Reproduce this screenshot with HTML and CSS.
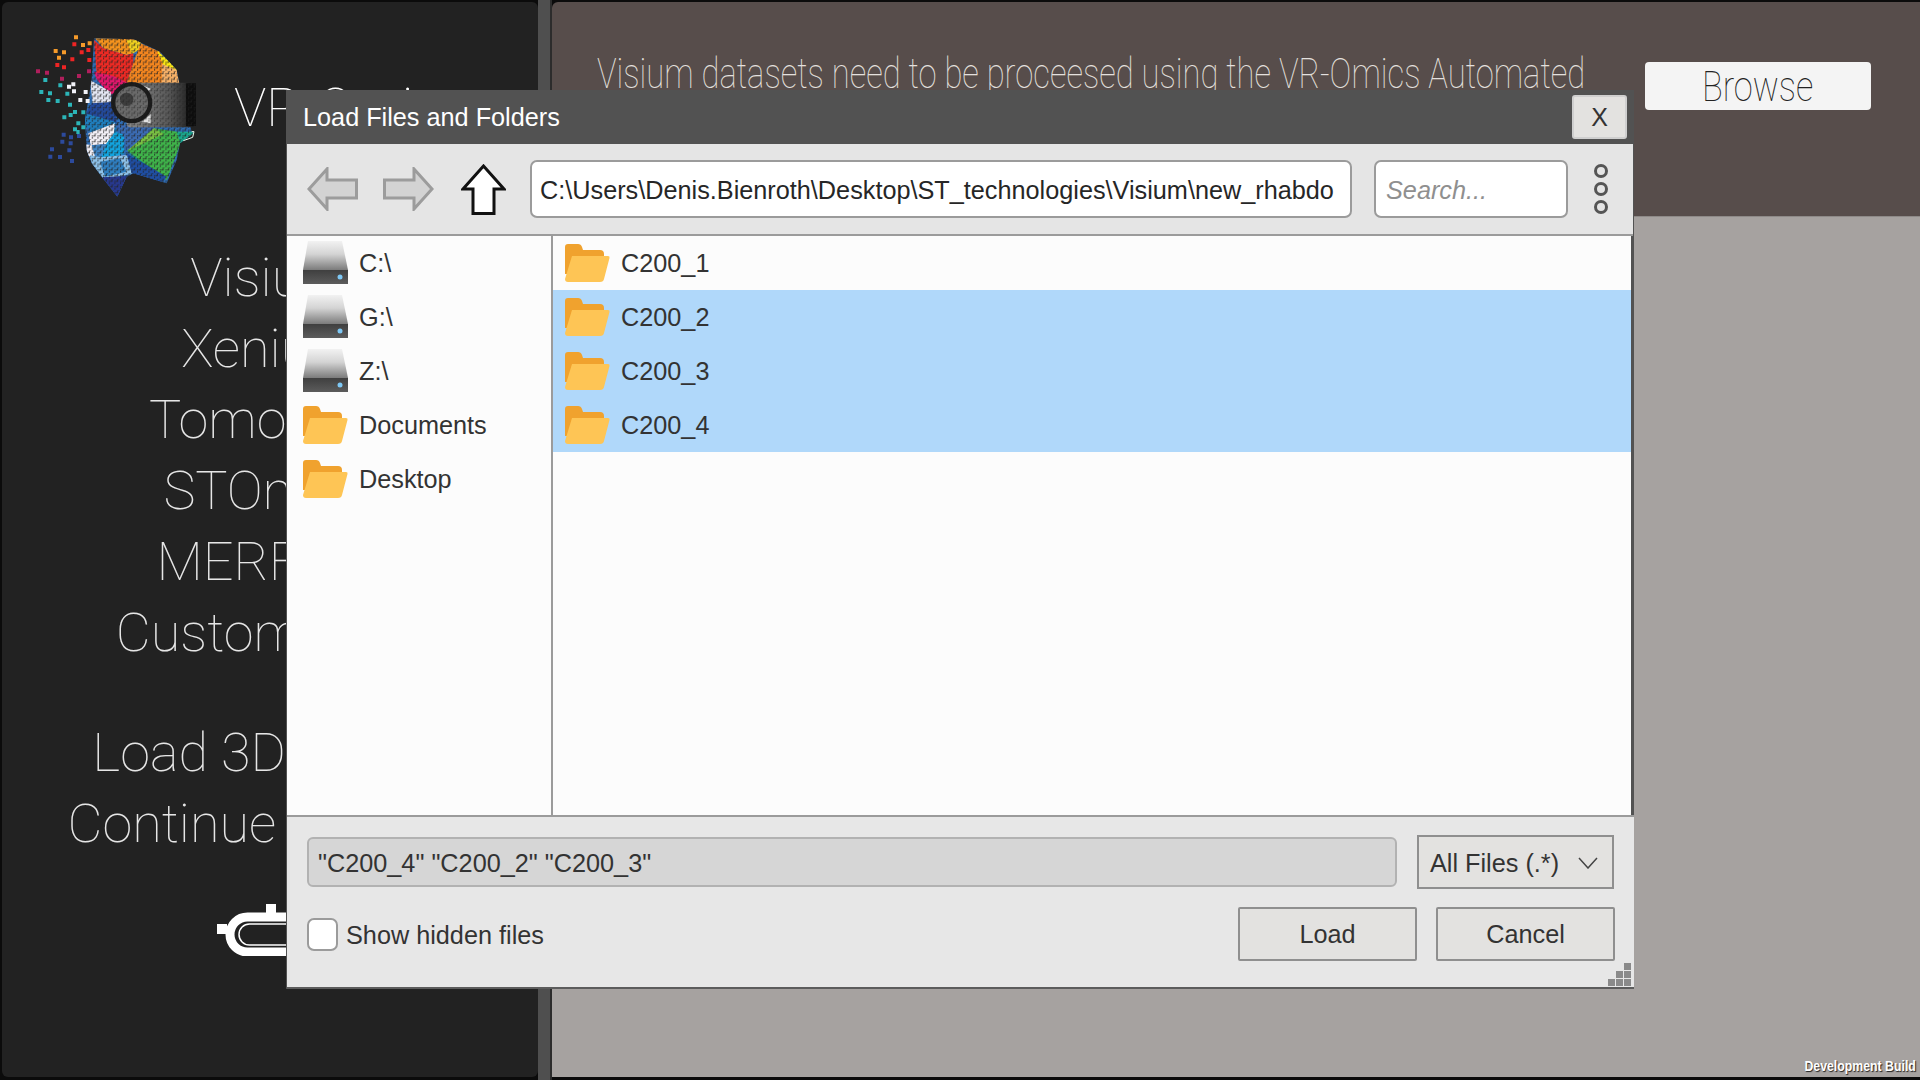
FILE: index.html
```html
<!DOCTYPE html>
<html lang="en">
<head>
    <meta charset="UTF-8">
    <meta name="viewport" content="width=device-width, initial-scale=1.0">
    <title>VR-Omics</title>
    <link rel="stylesheet" href="styles.css">
</head>
<body>

    <!-- shared icons -->
    <svg class="icon-defs" width="0" height="0">
        <defs>
            <linearGradient id="drive-top" x1="0" y1="0" x2="0" y2="1">
                <stop offset="0" stop-color="#f2f2f2"></stop>
                <stop offset="0.45" stop-color="#d4d4d4"></stop>
                <stop offset="1" stop-color="#7b7b7b"></stop>
            </linearGradient>
            <linearGradient id="drive-base" x1="0" y1="0" x2="0" y2="1">
                <stop offset="0" stop-color="#3f3f3f"></stop>
                <stop offset="1" stop-color="#5c5c5c"></stop>
            </linearGradient>
            <linearGradient id="goggle-body" x1="0" y1="0" x2="1" y2="0">
                <stop offset="0" stop-color="#8a8a8a"></stop>
                <stop offset="0.6" stop-color="#5a5a5a"></stop>
                <stop offset="1" stop-color="#161616"></stop>
            </linearGradient>
            <pattern id="mosaic" width="17" height="17" patternUnits="userSpaceOnUse">
                <path d="M2 0h7M11 8h5M0 8h4M4 3v6M13 11v5" stroke="#222" stroke-width="2.500" fill="none"></path>
            </pattern>
            <symbol id="drive" viewBox="0 0 45 44">
                <path d="M5 0H39L45 29H0Z" fill="url(#drive-top)"></path>
                <path d="M0 29H45V43H0Z" fill="url(#drive-base)"></path>
                <circle cx="37" cy="36" r="2.500" fill="#7ec8f5"></circle>
            </symbol>
            <symbol id="folder" viewBox="0 0 45 38">
                <path d="M0 3Q0 0 3 0H13Q16 0 17 3L18 6H35Q39 6 39 10V30H0Z" fill="#f0a22e"></path>
                <path d="M7 12H43Q45 12 44.500 14L39 35Q38.500 38 35 38H3Q0 38 0 35Z" fill="#fec555"></path>
            </symbol>
        </defs>
    </svg>

    <div class="app">
        <aside class="sidebar">
            <div class="brand">
                <svg class="logo" viewBox="0 0 600 570">
                    <defs>
                        <clipPath id="head-clip">
                            <path d="M222 55L340 58L420 95L470 150L478 190L515 335L520 340L480 370L470 420L440 490L340 460L320 470L292 530L245 470L215 430L200 390L195 300L215 180Z"></path>
                        </clipPath>
                    </defs>
                    <g clip-path="url(#head-clip)">
                        <rect x="190" y="50" width="340" height="490" fill="#2f6db5"></rect>
                        <path d="M222 50L345 50L365 75L340 100L320 105L250 85Z" fill="#f7941d"></path>
                        <path d="M320 60L362 60L366 85L335 102Z" fill="#f2d41f"></path>
                        <path d="M222 60L250 85L320 105L340 100L340 130L320 190L230 165Z" fill="#ee2a24"></path>
                        <path d="M362 70L420 95L430 130L425 195L320 190L340 130Z" fill="#f5861f"></path>
                        <path d="M410 90L475 150L440 162L428 130Z" fill="#fde910"></path>
                        <path d="M426 132L470 150L480 195L425 195Z" fill="#f9b268"></path>
                        <path d="M222 155L280 168L322 188L345 195L270 225L230 178Z" fill="#e5176d"></path>
                        <path d="M210 180L272 215L275 245L245 262L218 250Z" fill="#e5e8f5"></path>
                        <path d="M215 250L285 245L290 310L195 310L198 280Z" fill="#234a9d"></path>
                        <path d="M195 280L285 305L290 335L210 335L195 312Z" fill="#1f7fbf"></path>
                        <path d="M205 340L285 310L280 350L260 372L212 376Z" fill="#f4f1f8"></path>
                        <path d="M258 372L285 335L312 345L312 402L238 420Z" fill="#12a5e0"></path>
                        <path d="M285 315L410 315L395 345L322 392L310 345Z" fill="#3b6cb5"></path>
                        <path d="M200 378L260 372L240 420L205 420Z" fill="#3f86c8"></path>
                        <path d="M172 370L215 375L225 410L180 415Z" fill="#f4f1f8"></path>
                        <path d="M210 405L240 412L322 405L335 462L250 476L215 430Z" fill="#8fc3ea"></path>
                        <path d="M240 425L300 415L320 455L255 470Z" fill="#2f7fc1"></path>
                        <path d="M245 472L322 468L292 532Z" fill="#27388f"></path>
                        <path d="M322 392L402 325L472 335L482 370L440 480Z" fill="#3fb44a"></path>
                        <path d="M322 392L402 325L432 342Z" fill="#7ac143"></path>
                        <path d="M322 395L440 475L350 420Z" fill="#0e9a7a"></path>
                        <path d="M320 400L440 470L420 490L335 460Z" fill="#1f4ea3"></path>
                        <path d="M470 335L522 335L516 352L482 372Z" fill="#1aa98f"></path>
                        <rect x="190" y="50" width="340" height="490" fill="url(#mosaic)"></rect>
                    </g>
                    <path d="M48 148h12v12h-12zM75 152h12v12h-12zM120 170h12v12h-12zM171 162h12v12h-12zM201 148h12v12h-12z" fill="#b01f5c"></path>
                    <path d="M162 46h12v12h-12zM101 87h12v12h-12zM126 91h12v12h-12zM183 69h12v12h-12zM203 64h12v12h-12zM111 107h12v12h-12z" fill="#f59a2a"></path>
                    <path d="M157 67h12v12h-12zM179 91h12v12h-12zM199 84h12v12h-12zM151 112h12v12h-12zM106 129h12v12h-12zM126 136h12v12h-12zM202 114h12v12h-12z" fill="#ee2424"></path>
                    <path d="M70 174h12v12h-12zM115 190h12v12h-12zM58 210h12v12h-12zM84 214h12v12h-12zM136 215h12v12h-12zM79 234h12v12h-12zM107 237h12v12h-12zM144 248h12v12h-12zM159 270h12v12h-12zM146 279h12v12h-12zM127 286h12v12h-12zM184 271h12v12h-12zM169 304h12v12h-12zM184 316h12v12h-12zM159 322h12v12h-12zM169 330h10v12h-10z" fill="#2cb5b8"></path>
                    <path d="M141 194h12v12h-12zM154 187h12v12h-12zM156 208h12v12h-12zM191 210h12v12h-12zM175 234h12v12h-12zM197 237h12v12h-12z" fill="#f2f2f8"></path>
                    <path d="M125 338h12v12h-12zM147 346h12v12h-12zM171 342h12v12h-12zM121 359h12v12h-12zM146 364h12v12h-12zM90 382h12v12h-12zM142 385h12v12h-12zM85 404h12v12h-12zM114 405h12v12h-12zM150 417h12v12h-12z" fill="#2c4a9c"></path>
                    <rect x="320" y="188" width="205" height="134" rx="12" fill="url(#goggle-body)"></rect>
                    <rect x="498" y="190" width="30" height="128" fill="#0d0d0d"></rect>
                    <path d="M366 196L392 206L372 232ZM366 305L392 282L392 310Z" fill="#e2e2e2"></path>
                    <circle cx="335" cy="248" r="62" fill="#1a1a1a"></circle>
                    <circle cx="335" cy="248" r="49" fill="#6a6a6a"></circle>
                    <circle cx="320" cy="238" r="20" fill="#3d3d3d"></circle>
                    <rect x="270" y="185" width="260" height="140" fill="url(#mosaic)" opacity="0.7"></rect>
                    <path d="M515 335L522 335L518 352L490 362" fill="none" stroke="#e9fff2" stroke-width="3"></path>
                </svg>
                <div class="brand-name">VR-Omics</div>
            </div>

            <nav class="menu">
                <div class="menu-item">Visium</div>
                <div class="menu-item">Xenium</div>
                <div class="menu-item">Tomo-Seq</div>
                <div class="menu-item">STOmics</div>
                <div class="menu-item">MERFISH</div>
                <div class="menu-item">Custom Data</div>
                <div class="menu-item menu-gap">Load 3D Object</div>
                <div class="menu-item">Continue Session</div>
            </nav>

            <svg class="power-toggle" viewBox="0 0 140 52">
                <path d="M0 25H10M54 0V10" stroke="#fff" stroke-width="10" fill="none"></path>
                <rect x="13" y="13" width="114" height="35" rx="17.500" fill="none" stroke="#fff" stroke-width="9"></rect>
                <rect x="22" y="20" width="96" height="21" rx="10.500" fill="none" stroke="#fff" stroke-width="1.500"></rect>
            </svg>
        </aside>

        <div class="splitter"></div>

        <main class="main">
            <section class="main-top">
                <p class="main-intro">Visium datasets need to be proceesed using the VR-Omics Automated</p>
                <button class="browse-btn"><span>Browse</span></button>
            </section>
            <section class="main-bottom"></section>
        </main>
    </div>

    <div class="dev-build">Development Build</div>

    <!-- file browser, floats over the page -->
    <div class="dialog">
        <header class="dialog-title">
            <span>Load Files and Folders</span>
            <button class="close-btn">X</button>
        </header>

        <div class="toolbar">
            <svg class="nav-arrow" viewBox="0 0 51 44">
                <path d="M2 22L20 2V13H49.500V31H20V42Z"></path>
            </svg>
            <svg class="nav-arrow nav-forward" viewBox="0 0 51 44">
                <path d="M49 22L31 2V13H1.500V31H31V42Z"></path>
            </svg>
            <svg class="nav-up" viewBox="0 0 45 51">
                <path d="M22.500 2L43 25H33V49.500H12V25H2Z"></path>
            </svg>
            <div class="path-box">C:\Users\Denis.Bienroth\Desktop\ST_technologies\Visium\new_rhabdo</div>
            <div class="search-box">Search...</div>
            <div class="more-dots">
                <span></span>
                <span></span>
                <span></span>
            </div>
        </div>

        <div class="browser">
            <div class="quick-list">
                <div class="row"><svg class="row-icon"><use href="#drive"></use></svg><span>C:\</span></div>
                <div class="row"><svg class="row-icon"><use href="#drive"></use></svg><span>G:\</span></div>
                <div class="row"><svg class="row-icon"><use href="#drive"></use></svg><span>Z:\</span></div>
                <div class="row"><svg class="row-icon"><use href="#folder"></use></svg><span>Documents</span></div>
                <div class="row"><svg class="row-icon"><use href="#folder"></use></svg><span>Desktop</span></div>
            </div>
            <div class="file-list">
                <div class="row"><svg class="row-icon"><use href="#folder"></use></svg><span>C200_1</span></div>
                <div class="row selected"><svg class="row-icon"><use href="#folder"></use></svg><span>C200_2</span></div>
                <div class="row selected"><svg class="row-icon"><use href="#folder"></use></svg><span>C200_3</span></div>
                <div class="row selected"><svg class="row-icon"><use href="#folder"></use></svg><span>C200_4</span></div>
            </div>
        </div>

        <div class="dialog-footer">
            <div class="footer-row">
                <div class="name-box">"C200_4" "C200_2" "C200_3"</div>
                <div class="filter-box">
                    <span>All Files (.*)</span>
                    <svg class="chevron" viewBox="0 0 20 12">
                        <path d="M1 1L10 11L19 1"></path>
                    </svg>
                </div>
            </div>
            <div class="footer-row footer-actions">
                <label class="hidden-toggle"><span class="checkbox"></span><span>Show hidden files</span></label>
                <button class="action-btn">Load</button>
                <button class="action-btn">Cancel</button>
            </div>
            <div class="resize-grip">
                <i></i><i></i><i></i><i></i><i></i><i></i>
            </div>
        </div>
    </div>

</body>
</html>
```

FILE: styles.css
```css
html, body {
    margin: 0;
    padding: 0;
    width: 100%;
    height: 100%;
    overflow: hidden;
    background-color: #0b0b0b;
    font-family: "Liberation Sans", Arial, sans-serif;
}

.icon-defs {
    position: absolute;
}

.app {
    display: flex;
    height: 100%;
    box-sizing: border-box;
    padding: 2px 0 3px 2px;
    font-family: Roboto, sans-serif;
    font-weight: 100;
}

/* Left menu */
.sidebar {
    width: 536px;
    flex-shrink: 0;
    background-color: #222;
    border-radius: 6px;
    display: flex;
    flex-direction: column;
    align-items: center;
    color: #e6e6e6;
    overflow: hidden;
}

.brand {
    display: flex;
    align-self: flex-start;
    align-items: center;
    gap: 14px;
    padding: 18px 0 0 18px;
    height: 190px;
    box-sizing: content-box;
}

.logo {
    width: 200px;
    height: 190px;
    flex-shrink: 0;
}

.brand-name {
    font-size: 54px;
    white-space: nowrap;
    margin-top: -16px;
    color: #fff;
}

.menu {
    display: flex;
    flex-direction: column;
    align-items: center;
    margin-top: 32px;
}

.menu-item {
    font-size: 54px;
    line-height: 71px;
    white-space: nowrap;
}

.menu-gap {
    margin-top: 49px;
}

.power-toggle {
    width: 140px;
    height: 52px;
    margin-top: 45px;
    margin-left: 34px;
}

.splitter {
    width: 12px;
    flex-shrink: 0;
    margin-top: -2px;
    margin-bottom: -3px;
    background-color: #4f4f4f;
    border-right: 2px solid #2c2c2c;
}

.main {
    flex: 1;
    display: flex;
    flex-direction: column;
    min-width: 0;
}

.main-top {
    height: 214px;
    background-color: #574d4b;
    border-top-left-radius: 6px;
    display: flex;
    align-items: flex-start;
    box-sizing: border-box;
    padding: 45px 49px 0 45px;
}

.main-intro {
    margin: 0;
    flex: 1;
    min-width: 0;
    font-size: 43px;
    line-height: 52px;
    color: #e4e0de;
    white-space: nowrap;
    /* the original type is a squeezed Roboto */
    transform: scaleX(0.762);
    transform-origin: left center;
}

.browse-btn {
    width: 226px;
    height: 48px;
    flex-shrink: 0;
    margin-top: 15px;
    border: none;
    border-radius: 4px;
    background-color: #f4f4f4;
    font-family: Roboto, sans-serif;
    font-weight: 100;
    font-size: 43px;
    line-height: 48px;
    padding: 0;
    color: #222;
}

.browse-btn span {
    display: inline-block;
    transform: scaleX(0.8);
}

.main-bottom {
    flex: 1;
    background-color: #a6a2a0;
    border-top: 1px solid #8e8a88;
}

.dev-build {
    position: absolute;
    right: 4px;
    bottom: 7px;
    font-size: 15px;
    font-weight: bold;
    line-height: 15px;
    color: #fff;
    text-shadow: 1px 1px 1px #222;
    transform: scaleX(0.82);
    transform-origin: right center;
}

/* File browser dialog */
.dialog {
    position: absolute;
    left: 286px;
    top: 90px;
    width: 1348px;
    height: 899px;
    display: flex;
    flex-direction: column;
    font-size: 25.250px;
    color: #333;
    background-color: #525252;
}

.dialog-title {
    height: 54px;
    flex-shrink: 0;
    display: flex;
    align-items: center;
    justify-content: space-between;
    padding: 0 7px 0 17px;
    color: #fff;
    background-color: #525252;
}

.dialog-title span {
    padding-top: 1px;
}

.close-btn {
    width: 55px;
    height: 44px;
    border: 2px solid #cfcfcf;
    border-radius: 3px;
    background-color: #e3e2e0;
    font-family: "Liberation Sans", Arial, sans-serif;
    font-size: 25px;
    color: #333;
    padding: 0;
}

.toolbar {
    height: 92px;
    flex-shrink: 0;
    box-sizing: border-box;
    margin: 0 1px 0 1px;
    border-bottom: 2px solid #9b9b9b;
    display: flex;
    align-items: center;
    padding: 0 0 0 20px;
    background-color: #e5e5e5;
}

.nav-arrow {
    width: 51px;
    height: 44px;
    margin-right: 24px;
}

.nav-forward {
    margin-left: 1px;
}

.nav-arrow path {
    fill: #d3d3d3;
    stroke: #9c9c9c;
    stroke-width: 3;
}

.nav-up {
    width: 45px;
    height: 51px;
    margin-left: 3px;
}

.nav-up path {
    fill: #fff;
    stroke: #111;
    stroke-width: 3;
}

.path-box,
.search-box {
    height: 58px;
    box-sizing: border-box;
    border: 2px solid #9b9b9b;
    border-radius: 7px;
    background-color: #fff;
    line-height: 56px;
    padding-left: 8px;
    white-space: nowrap;
    overflow: hidden;
}

.path-box {
    width: 822px;
    margin-left: 24px;
    color: #262626;
}

.search-box {
    width: 194px;
    margin-left: 22px;
    padding-left: 10px;
    font-style: italic;
    color: #8f8f8f;
}

.more-dots {
    display: flex;
    flex-direction: column;
    gap: 4px;
    margin-left: 26px;
}

.more-dots span {
    width: 14px;
    height: 14px;
    box-sizing: border-box;
    border: 3px solid #555;
    border-radius: 50%;
}

.browser {
    flex: 1;
    display: flex;
    min-height: 0;
    margin: 0 3px 0 1px;
    background-color: #fcfcfc;
}

.quick-list {
    width: 266px;
    flex-shrink: 0;
    box-sizing: border-box;
    border-right: 2px solid #9b9b9b;
}

.file-list {
    flex: 1;
}

.row {
    height: 54px;
    display: flex;
    align-items: center;
    gap: 11px;
    padding-left: 16px;
    color: #333;
}

.row span {
    padding-top: 1px;
}

.file-list .row {
    padding-left: 12px;
    gap: 11px;
}

.row.selected {
    background-color: #b0d8fa;
}

.row-icon {
    width: 45px;
    height: 44px;
}

.dialog-footer {
    height: 174px;
    flex-shrink: 0;
    position: relative;
    box-sizing: border-box;
    margin: 0 0 0 1px;
    padding: 18px 19px 0 20px;
    border-top: 2px solid #9b9b9b;
    border-bottom: 2px solid #5c5c5c;
    background-color: rgba(235, 235, 235, 0.98);
}

.footer-row {
    display: flex;
    align-items: center;
}

.name-box {
    width: 1090px;
    height: 50px;
    box-sizing: border-box;
    border: 2px solid #b2b2b2;
    border-radius: 6px;
    background-color: #d6d6d6;
    line-height: 48px;
    padding-left: 9px;
}

.filter-box {
    width: 197px;
    height: 54px;
    box-sizing: border-box;
    margin-left: 20px;
    border: 2px solid #8f8f8f;
    background-color: #e3e2e0;
    display: flex;
    align-items: center;
    justify-content: space-between;
    padding: 2px 14px 0 11px;
}

.chevron {
    width: 20px;
    height: 12px;
}

.chevron path {
    fill: none;
    stroke: #444;
    stroke-width: 1.500;
}

.footer-actions {
    margin-top: 18px;
}

.hidden-toggle {
    display: flex;
    align-items: center;
    gap: 8px;
    margin-right: auto;
}

.hidden-toggle span:last-child {
    padding-top: 2px;
}

.checkbox {
    width: 31px;
    height: 33px;
    box-sizing: border-box;
    border: 2px solid #9b9b9b;
    border-radius: 7px;
    background-color: #fff;
}

.action-btn {
    width: 179px;
    height: 54px;
    margin-left: 19px;
    border: 2px solid #8f8f8f;
    border-radius: 2px;
    background-color: #e3e2e0;
    font-family: "Liberation Sans", Arial, sans-serif;
    font-size: 25.250px;
    color: #333;
    padding: 0;
}

.resize-grip {
    position: absolute;
    right: 3px;
    bottom: 1px;
    display: grid;
    grid-template-columns: repeat(3, 7px);
    grid-template-rows: repeat(3, 7px);
    gap: 1px;
}

.resize-grip i {
    background-color: #8a8a8a;
}

.resize-grip i:nth-child(1) {
    grid-column: 3;
}

.resize-grip i:nth-child(2) {
    grid-column: 2;
}
```
